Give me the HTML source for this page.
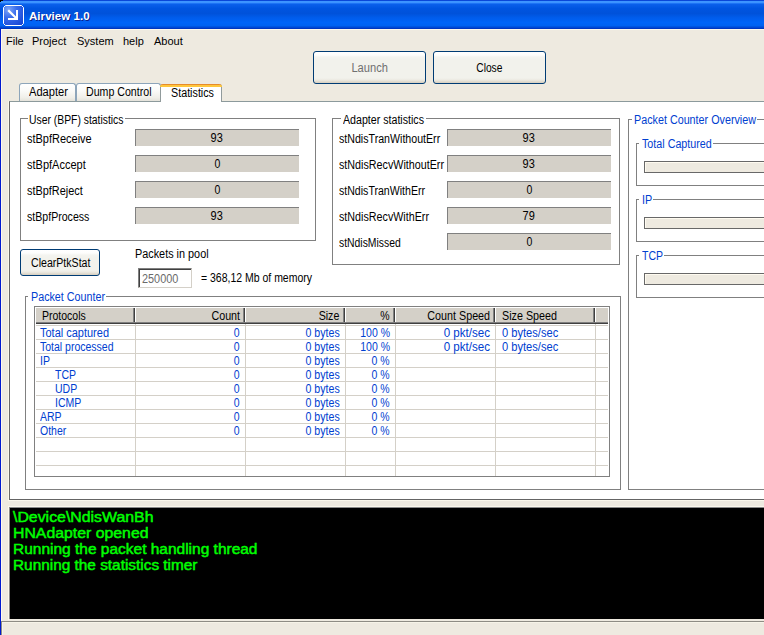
<!DOCTYPE html>
<html><head><meta charset="utf-8">
<style>
*{margin:0;padding:0;box-sizing:border-box}
html,body{width:764px;height:635px;overflow:hidden;background:#EEEAE0;font-family:"Liberation Sans",sans-serif;font-size:11px;color:#000}
.a{position:absolute}
.t{position:absolute;white-space:pre;line-height:13px}
#title{left:0;top:0;width:764px;height:29px;background:linear-gradient(to bottom,#0A47D8 0.5px,#3D95FF 1.5px,#3D93FF 2.5px,#1D74F5 3.5px,#0A5FEA 4.5px,#0055E0 8.5px,#0052DA 13.5px,#005CEB 17.5px,#0064F8 22.5px,#0062F2 25.5px,#0048D4 27.5px,#0036C0 28.5px)}
#lb{left:0;top:29px;width:1px;height:606px;background:#0019CF}
#lh{left:1px;top:29px;width:1px;height:592px;background:#FFF9EC}
#th{left:1px;top:29px;width:763px;height:1px;background:#FFF9EC}
.btn{position:absolute;border:1px solid #003C74;border-radius:3px;background:linear-gradient(to bottom,#FFFFFF 0px,#FDFDFC 3px,#F4F4F0 5px,#F2F2EC 8px,#F2F2EC calc(100% - 5px),#ECEAE2 calc(100% - 3px),#DDD7CA calc(100% - 1px),#D6CFC0 100%)}
.grp{position:absolute;border:1px solid #808080}
.gm{position:absolute;background:#fff;height:3px}
.box{position:absolute;background:#D4D0C8;border-top:1px solid #808080;border-left:1px solid #808080}
.pb{position:absolute;border:1px solid #686868;background:#EEEAE0;box-shadow:inset 1px 1px 0 #FFFBF0}
.tab{position:absolute;height:18px;border:1px solid #8DA5BA;border-bottom:none;border-radius:3px 3px 0 0;background:linear-gradient(to bottom,#FFFFFF 0%,#FAFAF8 40%,#F0EFE9 80%,#E4E2DA 100%)}
.con{position:absolute;left:13px;white-space:pre;font-size:14px;line-height:16px;color:#00FF00;-webkit-text-stroke:0.45px #00FF00;transform-origin:0 0}
</style></head><body>
<div id="title" class="a"></div>
<div id="lb" class="a"></div>
<div class="a" style="left:0;top:0;width:3px;height:1px;background:#000"></div>
<div class="a" style="left:0;top:1px;width:1px;height:1px;background:#000"></div>
<div id="lh" class="a"></div>
<div id="th" class="a"></div>
<svg class="a" style="left:3px;top:5px" width="21" height="21" viewBox="0 0 21 21">
<defs><radialGradient id="ig" cx="0.25" cy="0.2" r="0.9"><stop offset="0" stop-color="#7FA6F8"/><stop offset="0.45" stop-color="#3A6DEB"/><stop offset="1" stop-color="#1C4BD8"/></radialGradient></defs>
<path d="M2.5 0.5 H18.5 L20.5 2.5 V18.5 L18.5 20.5 H2.5 L0.5 18.5 V2.5 Z" fill="url(#ig)" stroke="#FFFFFF" stroke-width="1"/>
<path d="M6 6 L13.5 13.5" stroke="#fff" stroke-width="2.2" stroke-linecap="square"/>
<rect x="13" y="5" width="2" height="10" fill="#fff"/>
<rect x="5" y="13" width="10" height="2" fill="#fff"/>
</svg>
<div class="t" style="left:29px;top:10px;font-weight:bold;font-size:11.5px;letter-spacing:0.05px;color:#fff;text-shadow:1px 1px 0 #0A1E8C">Airview 1.0</div>

<!-- menu -->
<div class="t" style="left:6px;top:35px">File</div>
<div class="t" style="left:32px;top:35px">Project</div>
<div class="t" style="left:77px;top:35px">System</div>
<div class="t" style="left:123px;top:35px">help</div>
<div class="t" style="left:154px;top:35px">About</div>

<!-- buttons -->
<div class="btn" style="left:313px;top:51px;width:113px;height:33px"></div>
<div class="btn" style="left:433px;top:51px;width:113px;height:33px"></div>

<!-- tab page -->
<div class="a" style="left:8px;top:101px;width:756px;height:400px;border-left:1px solid #FBF8EC;border-bottom:1px solid #FBF8EC"></div>
<div class="a" style="left:9px;top:101px;width:755px;height:399px;background:#fff;border-left:1px solid #6A6A6A;border-top:1px solid #8C9A9C;border-bottom:1px solid #646464"></div>
<div class="tab" style="left:19px;top:83px;width:57px"></div>
<div class="tab" style="left:76px;top:83px;width:85px"></div>
<div class="a" style="left:160px;top:84px;width:62px;height:18px;background:#fff;border:1px solid #919B9C;border-bottom:none;border-top:none;border-radius:3px 3px 0 0"></div>
<div class="a" style="left:160px;top:84px;width:62px;height:3px;border-radius:3px 3px 0 0;background:linear-gradient(to bottom,#E68B2C 0,#E68B2C 1px,#FFC73C 1px,#FFC73C 3px)"></div>

<!-- group 1 -->
<div class="grp" style="left:20px;top:118px;width:296px;height:123px"></div>
<div class="gm" style="left:28px;top:117px;width:97px"></div>
<div class="box" style="left:135px;top:129px;width:164px;height:17px"></div>
<div class="box" style="left:135px;top:155px;width:164px;height:17px"></div>
<div class="box" style="left:135px;top:181px;width:164px;height:17px"></div>
<div class="box" style="left:135px;top:207px;width:164px;height:17px"></div>
<!-- group 2 -->
<div class="grp" style="left:332px;top:118px;width:288px;height:147px"></div>
<div class="gm" style="left:341px;top:117px;width:85px"></div>
<div class="box" style="left:447px;top:129px;width:164px;height:17px"></div>
<div class="box" style="left:447px;top:155px;width:164px;height:17px"></div>
<div class="box" style="left:447px;top:181px;width:164px;height:17px"></div>
<div class="box" style="left:447px;top:207px;width:164px;height:17px"></div>
<div class="box" style="left:447px;top:233px;width:164px;height:17px"></div>
<!-- clear + pool -->
<div class="btn" style="left:20px;top:249px;width:80px;height:27px"></div>
<div class="a" style="left:138px;top:268px;width:54px;height:20px;background:#fff;border-top:1px solid #808080;border-left:1px solid #808080;border-right:1px solid #D4D0C8;border-bottom:1px solid #D4D0C8;box-shadow:inset 1px 1px 0 #404040"></div>
<!-- overview -->
<div class="grp" style="left:628px;top:119px;width:200px;height:371px"></div>
<div class="gm" style="left:632px;top:118px;width:125px"></div>
<div class="grp" style="left:636px;top:143px;width:200px;height:43px"></div>
<div class="gm" style="left:639px;top:142px;width:74px"></div>
<div class="pb" style="left:644px;top:161px;width:200px;height:12px"></div>
<div class="grp" style="left:636px;top:199px;width:200px;height:43px"></div>
<div class="gm" style="left:639px;top:198px;width:14px"></div>
<div class="pb" style="left:644px;top:217px;width:200px;height:12px"></div>
<div class="grp" style="left:636px;top:255px;width:200px;height:43px"></div>
<div class="gm" style="left:639px;top:254px;width:25px"></div>
<div class="pb" style="left:644px;top:273px;width:200px;height:12px"></div>
<!-- packet counter -->
<div class="grp" style="left:25px;top:296px;width:596px;height:194px"></div>
<div class="gm" style="left:28px;top:295px;width:78px"></div>
<div class="a" style="left:34px;top:306px;width:576px;height:171px;background:#fff;border:1px solid #808080"></div>
<div class="a" style="left:36px;top:308px;width:572px;height:16px;background:#D4D0C8;border-bottom:1px solid #404040;box-shadow:inset 0 -1px 0 #808080"></div>
<div class="a" style="left:35px;top:308px;width:100px;height:14px;border-left:1px solid #fff;border-right:1px solid #404040;box-shadow:inset -1px 0 0 #808080"></div>
<div class="a" style="left:135px;top:308px;width:110px;height:14px;border-left:1px solid #fff;border-right:1px solid #404040;box-shadow:inset -1px 0 0 #808080"></div>
<div class="a" style="left:245px;top:308px;width:100px;height:14px;border-left:1px solid #fff;border-right:1px solid #404040;box-shadow:inset -1px 0 0 #808080"></div>
<div class="a" style="left:345px;top:308px;width:50px;height:14px;border-left:1px solid #fff;border-right:1px solid #404040;box-shadow:inset -1px 0 0 #808080"></div>
<div class="a" style="left:395px;top:308px;width:100px;height:14px;border-left:1px solid #fff;border-right:1px solid #404040;box-shadow:inset -1px 0 0 #808080"></div>
<div class="a" style="left:495px;top:308px;width:100px;height:14px;border-left:1px solid #fff;border-right:1px solid #404040;box-shadow:inset -1px 0 0 #808080"></div>
<div class="a" style="left:595px;top:308px;width:13px;height:14px;border-left:1px solid #fff"></div>
<div class="a" style="left:36px;top:325px;width:572px;height:1px;background:#D4D0C8"></div>
<div class="a" style="left:36px;top:339px;width:572px;height:1px;background:#D4D0C8"></div>
<div class="a" style="left:36px;top:353px;width:572px;height:1px;background:#D4D0C8"></div>
<div class="a" style="left:36px;top:367px;width:572px;height:1px;background:#D4D0C8"></div>
<div class="a" style="left:36px;top:381px;width:572px;height:1px;background:#D4D0C8"></div>
<div class="a" style="left:36px;top:395px;width:572px;height:1px;background:#D4D0C8"></div>
<div class="a" style="left:36px;top:409px;width:572px;height:1px;background:#D4D0C8"></div>
<div class="a" style="left:36px;top:423px;width:572px;height:1px;background:#D4D0C8"></div>
<div class="a" style="left:36px;top:437px;width:572px;height:1px;background:#D4D0C8"></div>
<div class="a" style="left:36px;top:451px;width:572px;height:1px;background:#D4D0C8"></div>
<div class="a" style="left:36px;top:465px;width:572px;height:1px;background:#D4D0C8"></div>
<div class="a" style="left:135px;top:324px;width:1px;height:152px;background:#D4D0C8"></div>
<div class="a" style="left:245px;top:324px;width:1px;height:152px;background:#D4D0C8"></div>
<div class="a" style="left:345px;top:324px;width:1px;height:152px;background:#D4D0C8"></div>
<div class="a" style="left:395px;top:324px;width:1px;height:152px;background:#D4D0C8"></div>
<div class="a" style="left:495px;top:324px;width:1px;height:152px;background:#D4D0C8"></div>
<div class="a" style="left:595px;top:324px;width:1px;height:152px;background:#D4D0C8"></div>

<!-- console -->
<div class="a" style="left:8px;top:506px;width:756px;height:114px;border-left:1px solid #FBF8EC;border-top:1px solid #FBF8EC"></div>
<div class="a" style="left:9px;top:507px;width:755px;height:112px;background:#000;border-top:1px solid #8A8A8A;border-left:1px solid #8A8A8A"></div>
<div class="a" style="left:1px;top:621px;width:763px;height:1px;background:#8E8C84"></div>
<div class="a" style="left:1px;top:622px;width:763px;height:1px;background:#F7F4E8"></div>
<div class="a" style="left:1px;top:622px;width:1px;height:13px;background:#8E8C84"></div>
<div class="a" style="left:2px;top:623px;width:1px;height:12px;background:#F7F4E8"></div>
<div class="con" style="top:509px;transform:scaleX(1.1332)">\Device\NdisWanBh</div>
<div class="con" style="top:525px;transform:scaleX(1.1303)">HNAdapter opened</div>
<div class="con" style="top:541px;transform:scaleX(1.1060)">Running the packet handling thread</div>
<div class="con" style="top:557px;transform:scaleX(1.0977)">Running the statistics timer</div>

<div class="t" style="top:62px;font-size:12px;color:#707070;left:349.81px;transform:scaleX(0.9270);transform-origin:50% 0;">Launch</div>
<div class="t" style="top:62px;font-size:12px;left:474.16px;transform:scaleX(0.8538);transform-origin:50% 0;">Close</div>
<div class="t" style="top:86px;font-size:12px;left:29.00px;transform:scaleX(0.9279);transform-origin:0 0;">Adapter</div>
<div class="t" style="top:86px;font-size:12px;left:86.00px;transform:scaleX(0.8848);transform-origin:0 0;">Dump Control</div>
<div class="t" style="top:87px;font-size:12px;left:170.60px;transform:scaleX(0.8955);transform-origin:0 0;">Statistics</div>
<div class="t" style="top:114px;font-size:12px;left:28.50px;transform:scaleX(0.8642);transform-origin:0 0;">User (BPF) statistics</div>
<div class="t" style="top:133px;font-size:12px;left:26.60px;transform:scaleX(0.9151);transform-origin:0 0;">stBpfReceive</div>
<div class="t" style="top:159px;font-size:12px;left:26.60px;transform:scaleX(0.9167);transform-origin:0 0;">stBpfAccept</div>
<div class="t" style="top:185px;font-size:12px;left:26.60px;transform:scaleX(0.9094);transform-origin:0 0;">stBpfReject</div>
<div class="t" style="top:211px;font-size:12px;left:26.60px;transform:scaleX(0.8826);transform-origin:0 0;">stBpfProcess</div>
<div class="t" style="top:132px;font-size:12px;left:210.32px;transform:scaleX(0.9132);transform-origin:50% 0;">93</div>
<div class="t" style="top:158px;font-size:12px;left:213.66px;transform:scaleX(0.8750);transform-origin:50% 0;">0</div>
<div class="t" style="top:184px;font-size:12px;left:213.66px;transform:scaleX(0.8750);transform-origin:50% 0;">0</div>
<div class="t" style="top:210px;font-size:12px;left:210.32px;transform:scaleX(0.9132);transform-origin:50% 0;">93</div>
<div class="t" style="top:114px;font-size:12px;left:343.00px;transform:scaleX(0.8865);transform-origin:0 0;">Adapter statistics</div>
<div class="t" style="top:133px;font-size:12px;left:339.00px;transform:scaleX(0.8858);transform-origin:0 0;">stNdisTranWithoutErr</div>
<div class="t" style="top:159px;font-size:12px;left:339.00px;transform:scaleX(0.8947);transform-origin:0 0;">stNdisRecvWithoutErr</div>
<div class="t" style="top:185px;font-size:12px;left:339.00px;transform:scaleX(0.8813);transform-origin:0 0;">stNdisTranWithErr</div>
<div class="t" style="top:211px;font-size:12px;left:339.00px;transform:scaleX(0.8939);transform-origin:0 0;">stNdisRecvWithErr</div>
<div class="t" style="top:237px;font-size:12px;left:339.00px;transform:scaleX(0.8660);transform-origin:0 0;">stNdisMissed</div>
<div class="t" style="top:132px;font-size:12px;left:522.32px;transform:scaleX(0.9132);transform-origin:50% 0;">93</div>
<div class="t" style="top:158px;font-size:12px;left:522.32px;transform:scaleX(0.9132);transform-origin:50% 0;">93</div>
<div class="t" style="top:184px;font-size:12px;left:525.66px;transform:scaleX(0.8750);transform-origin:50% 0;">0</div>
<div class="t" style="top:210px;font-size:12px;left:522.32px;transform:scaleX(0.9132);transform-origin:50% 0;">79</div>
<div class="t" style="top:236px;font-size:12px;left:525.66px;transform:scaleX(0.8750);transform-origin:50% 0;">0</div>
<div class="t" style="top:257px;font-size:12px;left:30.80px;transform:scaleX(0.8818);transform-origin:0 0;">ClearPtkStat</div>
<div class="t" style="top:248px;font-size:12px;left:135.00px;transform:scaleX(0.9043);transform-origin:0 0;">Packets in pool</div>
<div class="t" style="top:273px;font-size:12px;color:#6A6A6A;left:142.00px;transform:scaleX(0.9064);transform-origin:0 0;">250000</div>
<div class="t" style="top:272px;font-size:12px;left:200.90px;transform:scaleX(0.8736);transform-origin:0 0;">= 368,12 Mb of memory</div>
<div class="t" style="top:291px;font-size:12px;color:#0040D0;left:30.70px;transform:scaleX(0.8946);transform-origin:0 0;">Packet Counter</div>
<div class="t" style="top:114px;font-size:12px;color:#0040D0;left:634.00px;transform:scaleX(0.8966);transform-origin:0 0;">Packet Counter Overview</div>
<div class="t" style="top:138px;font-size:12px;color:#0040D0;left:642.00px;transform:scaleX(0.8943);transform-origin:0 0;">Total Captured</div>
<div class="t" style="top:194px;font-size:12px;color:#0040D0;left:642.00px;transform:scaleX(0.8992);transform-origin:0 0;">IP</div>
<div class="t" style="top:250px;font-size:12px;color:#0040D0;left:642.00px;transform:scaleX(0.8750);transform-origin:0 0;">TCP</div>
<div class="t" style="top:310px;font-size:12px;left:42.00px;transform:scaleX(0.8750);transform-origin:0 0;">Protocols</div>
<div class="t" style="top:310px;font-size:12px;left:207.77px;transform:scaleX(0.8929);transform-origin:100% 0;">Count</div>
<div class="t" style="top:310px;font-size:12px;left:316.36px;transform:scaleX(0.8867);transform-origin:100% 0;">Size</div>
<div class="t" style="top:310px;font-size:12px;left:378.93px;transform:scaleX(0.8750);transform-origin:100% 0;">%</div>
<div class="t" style="top:310px;font-size:12px;left:419.74px;transform:scaleX(0.8949);transform-origin:100% 0;">Count Speed</div>
<div class="t" style="top:310px;font-size:12px;left:501.60px;transform:scaleX(0.8959);transform-origin:0 0;">Size Speed</div>
<div class="t" style="top:327px;font-size:12px;color:#0040D0;left:40.00px;transform:scaleX(0.9152);transform-origin:0 0;">Total captured</div>
<div class="t" style="top:327px;font-size:12px;color:#0040D0;left:233.11px;transform:scaleX(0.8750);transform-origin:100% 0;">0</div>
<div class="t" style="top:327px;font-size:12px;color:#0040D0;left:300.90px;transform:scaleX(0.8836);transform-origin:100% 0;">0 bytes</div>
<div class="t" style="top:327px;font-size:12px;color:#0040D0;left:355.57px;transform:scaleX(0.8750);transform-origin:100% 0;">100 %</div>
<div class="t" style="top:327px;font-size:12px;color:#0040D0;left:441.57px;transform:scaleX(0.9660);transform-origin:100% 0;">0 pkt/sec</div>
<div class="t" style="top:327px;font-size:12px;color:#0040D0;left:501.60px;transform:scaleX(0.9258);transform-origin:0 0;">0 bytes/sec</div>
<div class="t" style="top:341px;font-size:12px;color:#0040D0;left:40.00px;transform:scaleX(0.8750);transform-origin:0 0;">Total processed</div>
<div class="t" style="top:341px;font-size:12px;color:#0040D0;left:233.11px;transform:scaleX(0.8750);transform-origin:100% 0;">0</div>
<div class="t" style="top:341px;font-size:12px;color:#0040D0;left:300.90px;transform:scaleX(0.8836);transform-origin:100% 0;">0 bytes</div>
<div class="t" style="top:341px;font-size:12px;color:#0040D0;left:355.57px;transform:scaleX(0.8750);transform-origin:100% 0;">100 %</div>
<div class="t" style="top:341px;font-size:12px;color:#0040D0;left:441.57px;transform:scaleX(0.9660);transform-origin:100% 0;">0 pkt/sec</div>
<div class="t" style="top:341px;font-size:12px;color:#0040D0;left:501.60px;transform:scaleX(0.9258);transform-origin:0 0;">0 bytes/sec</div>
<div class="t" style="top:355px;font-size:12px;color:#0040D0;left:40.00px;transform:scaleX(0.8750);transform-origin:0 0;">IP</div>
<div class="t" style="top:355px;font-size:12px;color:#0040D0;left:233.11px;transform:scaleX(0.8750);transform-origin:100% 0;">0</div>
<div class="t" style="top:355px;font-size:12px;color:#0040D0;left:300.90px;transform:scaleX(0.8836);transform-origin:100% 0;">0 bytes</div>
<div class="t" style="top:355px;font-size:12px;color:#0040D0;left:368.91px;transform:scaleX(0.8750);transform-origin:100% 0;">0 %</div>
<div class="t" style="top:369px;font-size:12px;color:#0040D0;left:55.00px;transform:scaleX(0.8750);transform-origin:0 0;">TCP</div>
<div class="t" style="top:369px;font-size:12px;color:#0040D0;left:233.11px;transform:scaleX(0.8750);transform-origin:100% 0;">0</div>
<div class="t" style="top:369px;font-size:12px;color:#0040D0;left:300.90px;transform:scaleX(0.8836);transform-origin:100% 0;">0 bytes</div>
<div class="t" style="top:369px;font-size:12px;color:#0040D0;left:368.91px;transform:scaleX(0.8750);transform-origin:100% 0;">0 %</div>
<div class="t" style="top:383px;font-size:12px;color:#0040D0;left:55.00px;transform:scaleX(0.8750);transform-origin:0 0;">UDP</div>
<div class="t" style="top:383px;font-size:12px;color:#0040D0;left:233.11px;transform:scaleX(0.8750);transform-origin:100% 0;">0</div>
<div class="t" style="top:383px;font-size:12px;color:#0040D0;left:300.90px;transform:scaleX(0.8836);transform-origin:100% 0;">0 bytes</div>
<div class="t" style="top:383px;font-size:12px;color:#0040D0;left:368.91px;transform:scaleX(0.8750);transform-origin:100% 0;">0 %</div>
<div class="t" style="top:397px;font-size:12px;color:#0040D0;left:55.00px;transform:scaleX(0.8750);transform-origin:0 0;">ICMP</div>
<div class="t" style="top:397px;font-size:12px;color:#0040D0;left:233.11px;transform:scaleX(0.8750);transform-origin:100% 0;">0</div>
<div class="t" style="top:397px;font-size:12px;color:#0040D0;left:300.90px;transform:scaleX(0.8836);transform-origin:100% 0;">0 bytes</div>
<div class="t" style="top:397px;font-size:12px;color:#0040D0;left:368.91px;transform:scaleX(0.8750);transform-origin:100% 0;">0 %</div>
<div class="t" style="top:411px;font-size:12px;color:#0040D0;left:40.00px;transform:scaleX(0.8750);transform-origin:0 0;">ARP</div>
<div class="t" style="top:411px;font-size:12px;color:#0040D0;left:233.11px;transform:scaleX(0.8750);transform-origin:100% 0;">0</div>
<div class="t" style="top:411px;font-size:12px;color:#0040D0;left:300.90px;transform:scaleX(0.8836);transform-origin:100% 0;">0 bytes</div>
<div class="t" style="top:411px;font-size:12px;color:#0040D0;left:368.91px;transform:scaleX(0.8750);transform-origin:100% 0;">0 %</div>
<div class="t" style="top:425px;font-size:12px;color:#0040D0;left:40.00px;transform:scaleX(0.8750);transform-origin:0 0;">Other</div>
<div class="t" style="top:425px;font-size:12px;color:#0040D0;left:233.11px;transform:scaleX(0.8750);transform-origin:100% 0;">0</div>
<div class="t" style="top:425px;font-size:12px;color:#0040D0;left:300.90px;transform:scaleX(0.8836);transform-origin:100% 0;">0 bytes</div>
<div class="t" style="top:425px;font-size:12px;color:#0040D0;left:368.91px;transform:scaleX(0.8750);transform-origin:100% 0;">0 %</div>
</body></html>
